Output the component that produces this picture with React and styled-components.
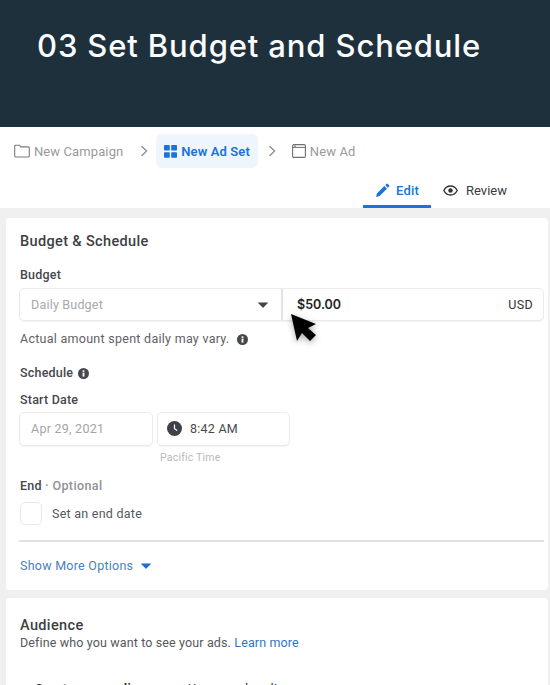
import React from "react";
import styled, { createGlobalStyle } from "styled-components";

const Global = createGlobalStyle`
  html, body { margin: 0; padding: 0; background: #fff; }
  body { font-family: Roboto, "Liberation Sans", sans-serif; }
  * { box-sizing: border-box; }
`;

const Page = styled.div`
  width: 550px;
  height: 685px;
  overflow: hidden;
  background: #f0f0f0;
  position: relative;
`;

const Banner = styled.header`
  height: 127px;
  background: #1f303d;
  padding: 24px 0 0 37px;
`;
const Title = styled.h1`
  margin: 0;
  font-family: Inter, sans-serif;
  font-weight: 500;
  font-size: 31px;
  line-height: 44px;
  letter-spacing: 0.87px;
  color: #fbfcfc;
`;

const TopPanel = styled.div`
  height: 81px;
  background: #fff;
  display: flex;
  flex-direction: column;
`;
const Crumbs = styled.nav`
  height: 48px;
  padding: 7px 0 0 14px;
  display: flex;
  align-items: stretch;
`;
const Crumb = styled.div`
  display: flex;
  align-items: center;
  gap: 4px;
  height: 34px;
  padding: ${(p) => (p.$active ? "0 8px" : "0")};
  border-radius: 6px;
  background: ${(p) => (p.$active ? "#eef5fc" : "transparent")};
  color: ${(p) => (p.$active ? "#1a73d8" : "#9a9a9a")};
  font-size: 13px;
  font-weight: ${(p) => (p.$active ? 600 : 400)};
  letter-spacing: 0.1px;
`;
const Chevron = styled.svg`
  width: 10px;
  height: 12px;
  margin: 11px ${(p) => p.$right}px 0 ${(p) => p.$left}px;
  flex: none;
`;
const Tabs = styled.div`
  flex: 1;
  display: flex;
  justify-content: flex-end;
  padding-right: 31px;
`;
const Tab = styled.div`
  height: 33px;
  padding: 0 12px;
  display: flex;
  align-items: center;
  gap: ${(p) => p.$gap}px;
  font-size: 13px;
  letter-spacing: ${(p) => (p.$active ? "0.2px" : "0")};
  font-weight: ${(p) => (p.$active ? 500 : 400)};
  color: ${(p) => (p.$active ? "#1a73d8" : "#3a3a3a")};
  border-bottom: 3px solid ${(p) => (p.$active ? "#1a73d8" : "transparent")};
`;

const Card = styled.section`
  margin: ${(p) => p.$top}px 2px 0 6px;
  background: #fff;
  border-radius: 4px;
  padding: ${(p) => p.$pad};
  height: ${(p) => p.$h}px;
`;
const CardTitle = styled.h2`
  margin: 0;
  font-size: 14.5px;
  line-height: 18px;
  font-weight: 500;
  letter-spacing: 0.36px;
  color: #3d3f42;
`;
const Label = styled.div`
  display: flex;
  align-items: center;
  gap: 5px;
  margin-top: ${(p) => p.$top}px;
  font-size: 12.5px;
  line-height: 16px;
  font-weight: 500;
  letter-spacing: 0.2px;
  color: #45484c;
`;
const Optional = styled.span`
  color: #8f9296;
  letter-spacing: 0.4px;
`;
const BudgetRow = styled.div`
  display: flex;
  height: 33px;
  margin: 5px 0 0 -1px;
  border-radius: 5px;
  border: 1px solid #ebebeb;
  box-shadow: 0 1px 1px rgba(0, 0, 0, 0.06);
`;
const BudgetSelect = styled.div`
  width: 263px;
  flex: none;
  display: flex;
  align-items: center;
  justify-content: space-between;
  padding: 0 13px 0 11px;
  border-right: 2px solid #e3e3e3;
  color: #a8a8a8;
  font-size: 12.5px;
  letter-spacing: 0.2px;
`;
const Caret = styled.svg`
  width: 10px;
  height: 6px;
  flex: none;
`;
const Amount = styled.div`
  flex: 1;
  display: flex;
  align-items: center;
  justify-content: space-between;
  padding: 0 10px 0 14px;
`;
const Money = styled.span`
  font-family: Inter, sans-serif;
  font-size: 12.5px;
  font-weight: 600;
  color: #222;
`;
const Currency = styled.span`
  font-size: 12.5px;
  letter-spacing: 0.3px;
  color: #333;
`;
const Note = styled.div`
  display: flex;
  align-items: center;
  gap: 8px;
  margin-top: 10px;
  font-size: 12.5px;
  line-height: 16px;
  letter-spacing: 0.27px;
  color: #5f6165;
`;
const DateRow = styled.div`
  display: flex;
  gap: 4px;
  margin: 4px 0 0 -1px;
`;
const Field = styled.div`
  width: ${(p) => p.$w}px;
  height: 34px;
  padding: 0 0 1px ${(p) => p.$pad}px;
  display: flex;
  align-items: center;
  gap: 8px;
  border: 1px solid #ebebeb;
  border-radius: 5px;
  box-shadow: 0 1px 1px rgba(0, 0, 0, 0.05);
  font-size: 12.5px;
  letter-spacing: 0.25px;
  color: ${(p) => p.$color};
`;
const Hint = styled.div`
  margin: 5px 0 0 140px;
  font-size: 10.5px;
  line-height: 14px;
  letter-spacing: 0.2px;
  color: #b9b9b9;
`;
const CheckRow = styled.div`
  display: flex;
  align-items: center;
  gap: 10px;
  margin-top: 8px;
  font-size: 12.5px;
  letter-spacing: 0.25px;
  color: #55585c;
`;
const CheckBox = styled.span`
  width: 22px;
  height: 23px;
  border: 1px solid #e8e8e8;
  border-radius: 5px;
`;
const Divider = styled.hr`
  margin: 15px 0 0 -1px;
  height: 2px;
  border: 0;
  background: #e2e2e2;
`;
const MoreLink = styled.div`
  display: flex;
  align-items: center;
  gap: 8px;
  margin-top: 16px;
  font-size: 12.5px;
  line-height: 16px;
  letter-spacing: 0.25px;
  color: #4a7fc1;
`;
const Description = styled.div`
  margin-top: 0;
  font-size: 12.5px;
  line-height: 16px;
  letter-spacing: 0.13px;
  color: #55585c;
`;
const Link = styled.span`
  color: #2f74c7;
`;
const CutOff = styled.div`
  margin: 30px 0 0 15px;
  font-size: 12.5px;
  line-height: 16px;
  letter-spacing: 0.4px;
  display: flex;
  gap: 28px;
  color: #333;
`;
const Bold = styled.span`
  font-weight: 700;
`;
const Pointer = styled.svg`
  position: absolute;
  left: 288px;
  top: 312px;
  width: 30px;
  height: 34px;
  filter: drop-shadow(0 2px 3px rgba(0, 0, 0, 0.35));
`;

const Info = ({ size = 11 }) => (
  <svg width={size} height={size} viewBox="0 0 12 12" style={{ flex: "none" }}>
    <circle cx="6" cy="6" r="6" fill="#45484c" />
    <rect x="5" y="5" width="2" height="4.4" fill="#fff" />
    <rect x="5" y="2.5" width="2" height="1.7" fill="#fff" />
  </svg>
);

const DownCaret = ({ color }) => (
  <Caret viewBox="0 0 10 6">
    <path d="M0.3 0.5h9.4a.3.3 0 0 1 .2.5L5.4 5.6a.6.6 0 0 1-.8 0L.1 1a.3.3 0 0 1 .2-.5z" fill={color} />
  </Caret>
);

const Sep = ({ left, right }) => (
  <Chevron $left={left} $right={right} viewBox="0 0 10 12">
    <path d="M2.5 1l5 5-5 5" fill="none" stroke="#8a8a8a" strokeWidth="1.3" />
  </Chevron>
);

export default function App() {
  return (
    <Page>
      <Global />
      <Banner>
        <Title>03 Set Budget and Schedule</Title>
      </Banner>
      <TopPanel>
        <Crumbs>
          <Crumb>
            <svg width="16" height="14" viewBox="0 0 16 14">
              <path d="M.7 12V2.2c0-.6.4-1 1-1h3.6l1.6 1.7h7.4c.6 0 1 .4 1 1V12c0 .6-.4 1-1 1H1.7c-.6 0-1-.4-1-1z" fill="none" stroke="#7b7b7b" strokeWidth="1.1" />
            </svg>
            New Campaign
          </Crumb>
          <Sep left={16} right={7} />
          <Crumb $active>
            <svg width="13" height="13" viewBox="0 0 13 13">
              <g fill="#1a73d8">
                <rect x="0" y="0" width="5.8" height="5.6" rx=".8" />
                <rect x="7.2" y="0" width="5.8" height="5.6" rx=".8" />
                <rect x="0" y="7.2" width="5.8" height="5.6" rx=".8" />
                <rect x="7.2" y="7.2" width="5.8" height="5.6" rx=".8" />
              </g>
            </svg>
            New Ad Set
          </Crumb>
          <Sep left={9} right={15} />
          <Crumb>
            <svg width="14" height="14" viewBox="0 0 14 14">
              <rect x=".6" y=".6" width="12.8" height="12.8" rx="1.4" fill="none" stroke="#6f6f6f" strokeWidth="1.1" />
              <path d="M1 3.4h12" stroke="#6f6f6f" strokeWidth="1" />
              <rect x="2" y="1.6" width="2" height="1" fill="#6f6f6f" />
            </svg>
            New Ad
          </Crumb>
        </Crumbs>
        <Tabs>
          <Tab $active $gap={6}>
            <svg width="15" height="15" viewBox="0 0 15 15">
              <path d="M1 14l.9-3.6 7.4-7.4 2.7 2.7-7.4 7.4L1 14zM10.2 2.1l1.2-1.2a1 1 0 0 1 1.4 0l1.3 1.3a1 1 0 0 1 0 1.4l-1.2 1.2-2.7-2.7z" fill="#1a73d8" />
            </svg>
            Edit
          </Tab>
          <Tab $gap={8}>
            <svg width="15" height="11" viewBox="0 0 15 11">
              <path d="M.8 5.5C2.2 2.7 4.6 1 7.5 1s5.3 1.7 6.7 4.5C12.8 8.3 10.4 10 7.5 10S2.2 8.3.8 5.5z" fill="none" stroke="#333" strokeWidth="1.3" />
              <circle cx="7.5" cy="5.5" r="2.2" fill="#333" />
            </svg>
            Review
          </Tab>
        </Tabs>
      </TopPanel>
      <Card $top={10} $pad="15px 4px 0 14px" $h={372}>
        <CardTitle>Budget &amp; Schedule</CardTitle>
        <Label $top={16}>Budget</Label>
        <BudgetRow>
          <BudgetSelect>
            Daily Budget
            <DownCaret color="#444" />
          </BudgetSelect>
          <Amount>
            <Money>$50.00</Money>
            <Currency>USD</Currency>
          </Amount>
        </BudgetRow>
        <Note>
          Actual amount spent daily may vary.
          <Info />
        </Note>
        <Label $top={18}>
          Schedule <Info />
        </Label>
        <Label $top={11}>Start Date</Label>
        <DateRow>
          <Field $w={134} $pad={11} $color="#a5a5a5">Apr 29, 2021</Field>
          <Field $w={133} $pad={9} $color="#4a4a4a">
            <svg width="15" height="15" viewBox="0 0 15 15">
              <circle cx="7.5" cy="7.5" r="7.5" fill="#3e4247" />
              <path d="M7.5 3.4v4.3l2.7 1.9" fill="none" stroke="#fff" strokeWidth="1.2" />
            </svg>
            8:42 AM
          </Field>
        </DateRow>
        <Hint>Pacific Time</Hint>
        <Label $top={13}>
          <span>End <Optional>· Optional</Optional></span>
        </Label>
        <CheckRow>
          <CheckBox />
          Set an end date
        </CheckRow>
        <Divider />
        <MoreLink>
          Show More Options
          <DownCaret color="#1a6fd0" />
        </MoreLink>
      </Card>
      <Card $top={8} $pad="19px 6px 0 14px" $h={120}>
        <CardTitle>Audience</CardTitle>
        <Description>
          Define who you want to see your ads. <Link>Learn more</Link>
        </Description>
        <CutOff>
          <Bold>Create new audience</Bold>
          <span>Use saved audience</span>
        </CutOff>
      </Card>
      <Pointer viewBox="0 0 30 34">
        <path d="M3 2l6 27 5-8 8 8 6-6-8-7 8-4z" fill="#000" />
      </Pointer>
    </Page>
  );
}
